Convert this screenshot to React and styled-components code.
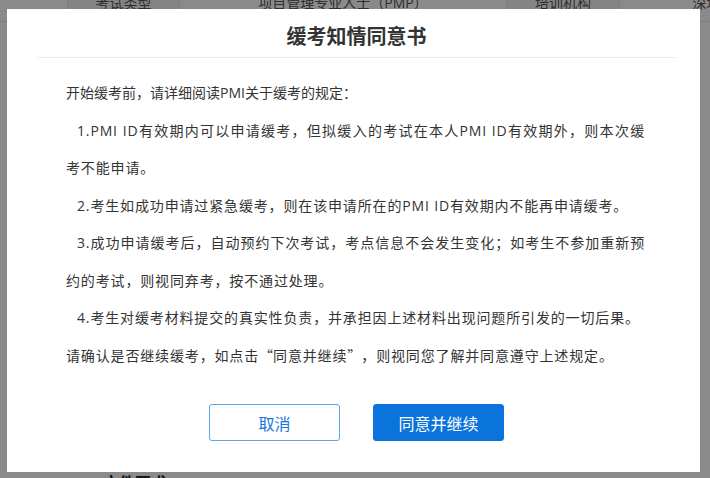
import React from "react";
import styled, { createGlobalStyle } from "styled-components";

const GlobalStyle = createGlobalStyle`
  body {
    margin: 0;
    overflow: hidden;
    font-family: "Open Sans", "Noto Sans CJK SC", sans-serif;
    color: #333;
  }
`;

const Page = styled.div`
  height: 478px;
  display: flex;
  flex-direction: column;
  justify-content: space-between;
  background: #fff;
  overflow: hidden;
`;

const InfoRow = styled.div`
  display: flex;
  margin-top: -15px;
  border-bottom: 1px solid #e5e5e5;
`;

const Cell = styled.div`
  flex: 0 0 ${(p) => p.$w}px;
  height: 36px;
  line-height: 36px;
  text-align: center;
  font-size: 14px;
  color: #555;
  white-space: nowrap;
  overflow: hidden;
  background: ${(p) => (p.$label ? "#f4f4f4" : "#fff")};
  border-right: 1px solid #e5e5e5;
  box-sizing: border-box;
`;

const SectionTitle = styled.div`
  padding-left: 103px;
  margin-bottom: -16px;
  font-size: 16px;
  line-height: 22px;
  font-weight: bold;
  color: #222;
`;

const Overlay = styled.div`
  position: fixed;
  inset: 0;
  background: rgba(0, 0, 0, 0.46);
  padding: 9px 10px 6px 7px;
  display: flex;
  align-items: flex-start;
`;

const Modal = styled.div`
  width: 693px;
  height: 463px;
  box-sizing: border-box;
  padding-left: 6px;
  background: #fff;
  display: flex;
  flex-direction: column;
`;

const Header = styled.div`
  padding: 16px 0 8px;
  text-align: center;
  font-size: 20px;
  line-height: 24px;
  font-weight: bold;
  color: #333;
`;

const Divider = styled.div`
  height: 1px;
  margin: 0 24px;
  background: #eee;
`;

const Body = styled.div`
  padding: 16px 55px 0 53px;
  font-size: 14px;
  line-height: 37.5px;
  color: #333;
  text-align: justify;
`;

const Para = styled.p`
  margin: 0;
  letter-spacing: ${(p) => (p.$plain ? 0 : 0.85)}px;
  text-indent: ${(p) => (p.$item ? 11 : 0)}px;
`;

/* full-width quote mark: glyph sits against the quoted text */
const Quote = styled.span`
  display: inline-block;
  width: 14px;
  text-indent: 0;
  font-family: "Noto Sans CJK SC", sans-serif;
  text-align: ${(p) => (p.$open ? "right" : "left")};
`;

const Footer = styled.div`
  display: flex;
  justify-content: center;
  gap: 33px;
  padding-top: 30px;
`;

const Button = styled.button`
  width: 131px;
  height: 37px;
  border-radius: 3px;
  font-family: "Noto Sans CJK SC", sans-serif;
  font-size: 16px;
  cursor: pointer;
  border: 1px solid ${(p) => (p.$primary ? "#0a73dc" : "#5aa6ec")};
  background: ${(p) => (p.$primary ? "#0a73dc" : "#fff")};
  color: ${(p) => (p.$primary ? "#fff" : "#1677d9")};
`;

const cells = [
  { w: 68, text: "" },
  { w: 112, text: "考试类型", label: true },
  { w: 327, text: "项目管理专业人士（PMP）" },
  { w: 113, text: "培训机构", label: true },
  { w: 174, text: "深圳" },
];

const rules = [
  "1.PMI ID有效期内可以申请缓考，但拟缓入的考试在本人PMI ID有效期外，则本次缓考不能申请。",
  "2.考生如成功申请过紧急缓考，则在该申请所在的PMI ID有效期内不能再申请缓考。",
  "3.成功申请缓考后，自动预约下次考试，考点信息不会发生变化；如考生不参加重新预约的考试，则视同弃考，按不通过处理。",
  "4.考生对缓考材料提交的真实性负责，并承担因上述材料出现问题所引发的一切后果。",
];

export default function App() {
  return (
    <>
      <GlobalStyle />
      <Page>
        <InfoRow>
          {cells.map((c, i) => (
            <Cell key={i} $w={c.w} $label={c.label}>
              {c.text}
            </Cell>
          ))}
        </InfoRow>
        <SectionTitle>文件要求:</SectionTitle>
      </Page>
      <Overlay>
        <Modal>
          <Header>缓考知情同意书</Header>
          <Divider />
          <Body>
            <Para $plain>开始缓考前，请详细阅读PMI关于缓考的规定：</Para>
            {rules.map((r) => (
              <Para key={r} $item>
                {r}
              </Para>
            ))}
            <Para>
              请确认是否继续缓考，如点击<Quote $open>“</Quote>同意并继续
              <Quote>”</Quote>，则视同您了解并同意遵守上述规定。
            </Para>
          </Body>
          <Footer>
            <Button>取消</Button>
            <Button $primary>同意并继续</Button>
          </Footer>
        </Modal>
      </Overlay>
    </>
  );
}
